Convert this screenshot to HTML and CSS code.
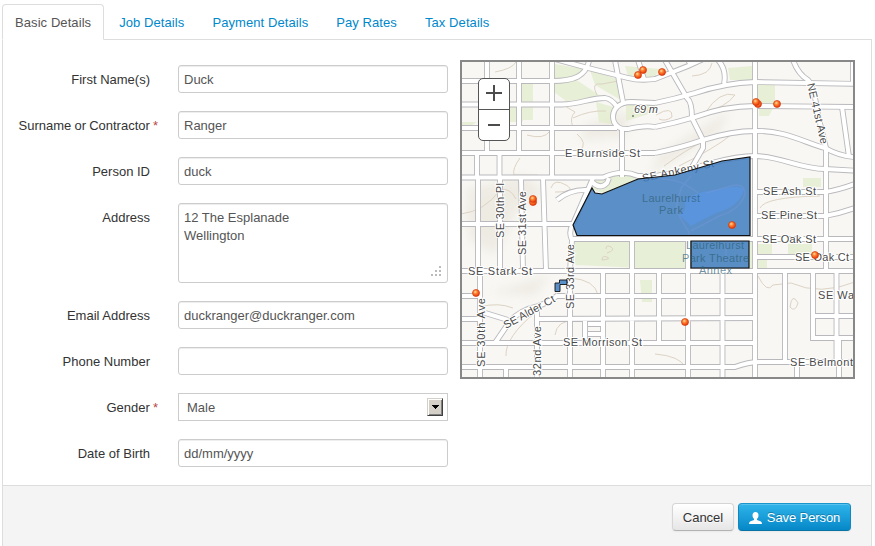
FILE: index.html
```html
<!DOCTYPE html>
<html lang="en">
<head>
<meta charset="utf-8">
<title>Person Details</title>
<link rel="stylesheet" href="styles.css">
</head>
<body>
<nav class="tabs">
  <a class="tab active">Basic Details</a>
  <a class="tab">Job Details</a>
  <a class="tab">Payment Details</a>
  <a class="tab">Pay Rates</a>
  <a class="tab">Tax Details</a>
</nav>
<main class="panel">
  <div class="content">
    <form class="fields">
      <div class="row"><label class="label">First Name(s)</label><input class="control" value="Duck"></div>
      <div class="row"><label class="label required">Surname or Contractor <span class="star">*</span></label><input class="control" value="Ranger"></div>
      <div class="row"><label class="label">Person ID</label><input class="control" value="duck"></div>
      <div class="row"><label class="label">Address</label>
        <div class="control area">12 The Esplanade<br>Wellington
          <svg class="grip" viewBox="0 0 11 11"><path d="M8 0h2v2H8zM4 4h2v2H4zM8 4h2v2H8zM0 8h2v2H0zM4 8h2v2H4zM8 8h2v2H8z"/></svg>
        </div></div>
      <div class="row"><label class="label">Email Address</label><input class="control" value="duckranger@duckranger.com"></div>
      <div class="row"><label class="label">Phone Number</label><input class="control"></div>
      <div class="row"><label class="label required">Gender <span class="star">*</span></label>
        <div class="control select"><span>Male</span><span class="drop"><svg viewBox="0 0 7 4"><path d="M0 0h7v1H6v1H5v1H4v1H3V3H2V2H1V1H0z"/></svg></span></div></div>
      <div class="row"><label class="label">Date of Birth</label><input class="control" value="dd/mm/yyyy"></div>
    </form>
    <div class="map">
      <svg class="canvas" viewBox="462 62 391 315">
        <defs>
          <radialGradient id="pin" cx=".4" cy=".35" r=".65"><stop offset="0" stop-color="#ffe0a0"/><stop offset=".4" stop-color="#ff8230"/><stop offset="1" stop-color="#e83608"/></radialGradient>
          <filter id="soft"><feGaussianBlur stdDeviation="5"/></filter>
          <g id="roads">
            <path d="M487 55V153M519 55V153M552 55V178M477 153V178M499.500 153V178M478 178V271L480 271V385M500 178V271M521 178L523 271M543 178L546 271"/>
            <path d="M455 81H552C572 81 588 78 590 55M455 104.500H562C580 104 590 98 605 98Q612 99 617 107Q611 113 614 122Q618 130 628 129Q645 125 655 127M617 107Q622 102 632 102L655 103M455 128H617M455 153H655M455 177.500H603Q622 169 638 176L655 176"/>
            <path d="M540 55L588 68L628 78Q640 81 655 79L688 66L712 55M614 55L623 102M622 128V177M638 60L644 79M593 178L573 224Q568 232 572 240L570 271V385M557 200Q570 189 588 190M592 182Q600 190 607 183L609 178"/>
            <path d="M655 103Q675 99 695 93Q725 83 755 82L860 84M655 127Q675 123 695 117Q725 106 755 106L860 107M655 153Q680 148 703 140Q732 131 755 131C785 130 805 143 825 148Q843 158 860 157M655 176Q680 172 712 163Q738 156 755 156C780 156 800 169 825 169L860 171"/>
            <path d="M662 55L687 98Q692 102 692 118L703 140V148L692 167M718 60Q727 70 724 84M686 55L691 66M755 55V385M793 60Q798 74 808 80Q814 86 818 115L826 148V271M842 107L849 157M853 55V84M755 192H825Q840 190 860 182M755 216H825Q842 213 860 206M572 239H860M755 257H860"/>
            <path d="M455 224H573M455 271H860M455 296H480M557 296H755M455 319H480M537 319L755 318M455 343H755M455 367H735Q748 362 760 362H860M482 312L508 320M495 343L508 324Q518 310 538 306Q550 302 558 295M537 308V385M603 271V385M632 239V385M659 271V343M688 239V385M722.500 271V385M785 271V362M813 271V338H860M836.500 271V362M813 316H860M797 362V385M839 338V385M506 367V385M585 319V339M588 324H602M588 334H602"/>
          </g>
        </defs>
        <rect x="460" y="60" width="396" height="320" fill="#f8f7f3"/>
        <g fill="#e8e4da" opacity=".6" filter="url(#soft)"><path d="M585 125L630 110L625 137L580 140zM658 155L730 110L720 132L650 175zM465 190L525 175L545 192L480 238zM490 293L550 275L535 295zM465 205L515 218L495 255L470 240z"/></g>
        <path fill="#e1ebcb" opacity=".72" d="M522 81H533V120H522zM462 130L512 104L527 113L522 122H462zM555 64L588 70L575 79L602 97L566 101L554 92zM590 70L620 80L619 99L595 85zM596 102L613 107L612 124L599 122zM625 66L660 69L654 78L628 76zM626 104L658 104L655 112L626 121zM593 179L625 173L638 180L605 194L592 189zM575 242H687V270L575 265zM690 242H753V270H690zM728 68L752 66V80H730zM758 83H775V104H758zM759 108H773L769 116H759zM803 178H821V187H803zM758 244H772V255H758zM788 244H812V255H788zM758 260H767V270H758zM640 280H652V302H642z"/>
        <path class="contour" d="M495 72Q512 69 516 62M597 95Q590 82 602 84L618 81M563 105L575 112Q569 118 573 127Q585 131 597 126M573 118Q590 110 606 111M520 158Q512 169 514 175H538M527 135Q544 140 550 131M461 214Q485 211 500 190Q510 187 516 199M577 134Q588 143 580 151M656 115Q673 105 672 117Q665 122 659 119M705 113Q720 90 735 95Q725 108 704 112M664 166Q710 132 731 135Q715 148 679 166M692 76Q710 75 712 63M760 208Q765 197 820 196M758 276Q767 294 773 285L791 283Q820 296 855 282M790 307Q792 292 798 303Q795 313 790 307M655 354Q680 356 685 367M506 356Q505 337 536 312M480 307Q498 302 513 308M555 335Q557 320 574 321M571 278Q595 280 598 295M606 249Q606 244 611 247T607 253M602 260Q602 255 607 257T602 260M551 188Q554 178 566 185T555 192"/>
        <use href="#roads" class="casing"/><use href="#roads" class="surface"/>
        <circle cx="633" cy="116" r="1" fill="#777"/>
        <g class="maplabel">
          <text x="565" y="157" textLength="75">E Burnside St</text>
          <text x="634" y="113" textLength="24" font-style="italic">69 m</text>
          <text transform="translate(643 182) rotate(-12)" textLength="73">SE Ankeny St</text>
          <text transform="translate(807 84) rotate(77)" textLength="62">NE 41st Ave</text>
          <text x="763" y="195" textLength="53">SE Ash St</text>
          <text x="761" y="219" textLength="56">SE Pine St</text>
          <text x="762" y="243" textLength="54">SE Oak St</text>
          <text x="795" y="261" textLength="54">SE Oak Ct</text>
          <text x="468" y="275" textLength="64">SE Stark St</text>
          <text x="563" y="346" textLength="79">SE Morrison St</text>
          <text x="790" y="366" textLength="63">SE Belmont</text>
          <text x="818" y="299" textLength="36">SE Wa</text>
          <text transform="translate(504 238) rotate(-90)" textLength="55">SE 30th Pl</text>
          <text transform="translate(526 255) rotate(-90)" textLength="64">SE 31st Ave</text>
          <text transform="translate(574 309) rotate(-90)" textLength="65">SE 33rd Ave</text>
          <text transform="translate(485 367) rotate(-90)" textLength="69">SE 30th Ave</text>
          <text transform="translate(541 376) rotate(-90)" textLength="50">32nd Ave</text>
          <text transform="translate(506 329) rotate(-29)" textLength="57">SE Alder Ct</text>
        </g>
        <g class="area-shape"><path d="M592 188L595 193L602 194L638 179L675 175L712 164L722 161L750 157V235.500H577L573 225z"/><path d="M691 241H749V268H691z"/><path class="small" d="M555 283H559.500V280H567V284.500H560V291.500H555z"/></g>
        <path d="M684 200Q700 190 717 190Q740 183 744 190Q739 207 716 213L691 226L679 215Q688 211 684 200z" fill="#5a96e8" opacity=".65"/>
        <path d="M662 179Q678 180 686 185T698 193M691 176L681 188L677 204Q675 212 689 232V235M726 243V262M691 231L719 216Q740 210 745 194Q745 181 727 187L706 193" fill="none" stroke="#7599dc" stroke-width="1.500" opacity=".4"/>
        <g class="parklabel"><text x="642" y="202" textLength="58">Laurelhurst</text><text x="659" y="214" textLength="24">Park</text><text x="686" y="249" textLength="58">Laurelhurst</text><text x="682" y="262" textLength="67">Park Theatre</text><text x="699" y="274" textLength="33">Annex</text></g>
        <g class="pins"><circle cx="638" cy="75" r="3.500"/><circle cx="643" cy="70" r="3.500"/><circle cx="662" cy="72" r="3.500"/><circle cx="758" cy="104" r="3.500"/><circle cx="756" cy="102" r="3.500"/><circle cx="777" cy="104" r="3.500"/><circle cx="533" cy="202" r="3.500"/><circle cx="533" cy="199" r="3.500"/><circle cx="732" cy="225" r="3.500"/><circle cx="815" cy="255" r="3.500"/><circle cx="476" cy="293" r="3.500"/><circle cx="685" cy="322" r="3.500"/></g>
      </svg>
      <div class="zoom"><svg viewBox="0 0 30 30"><path d="M7 14h16M15 6v16"/></svg><svg viewBox="0 0 30 30"><path d="M9 15h12"/></svg></div>
    </div>
  </div>
  <footer class="actions">
    <button class="btn">Cancel</button>
    <button class="btn primary"><svg viewBox="0 0 13 12"><path d="M6.500 0C8.500 0 9.500 1.300 9.500 3.200C9.500 5 8.700 6.200 8 6.800V8L11.500 9.300Q13 10 13 12H0Q0 10 1.500 9.300L5 8V6.800C4.300 6.200 3.500 5 3.500 3.200C3.500 1.300 4.500 0 6.500 0z"/></svg>Save Person</button>
  </footer>
</main>
</body>
</html>
```
FILE: styles.css
```css
* { box-sizing: border-box; }
body {
  margin: 0;
  padding: 4px 3px 0 2px;
  height: 546px;
  overflow: hidden;
  display: flex;
  flex-direction: column;
  background: #fff;
  color: #333;
  font: 13px/18px "Liberation Sans", Arial, sans-serif;
}
.tabs { display: flex; gap: 2px; height: 36px; flex: none; border-bottom: 1px solid #ddd; letter-spacing: .08px; }
.tab { height: 36px; padding: 9px 12px 8px; border: 1px solid transparent; border-radius: 4px 4px 0 0; color: #0088cc; white-space: nowrap; }
.tab.active { color: #555; background: #fff; border-color: #ddd #ddd #fff; }
.panel { flex: 1; display: flex; flex-direction: column; border: solid #ddd; border-width: 0 1px; }
.content { display: flex; gap: 12px; height: 445px; padding-top: 20px; }
.fields { display: flex; flex-direction: column; gap: 18px; width: 445px; padding-top: 5px; }
.row { display: flex; justify-content: space-between; }
.label { width: 147px; padding-top: 6px; text-align: right; white-space: nowrap; }
.label.required { width: 155px; word-spacing: -.5px; }
.star { color: #b94a48; }
.control {
  width: 270px;
  height: 28px;
  margin: 0;
  padding: 4px 5px;
  border: 1px solid #ccc;
  border-radius: 3px;
  background: #fff;
  box-shadow: inset 0 1px 1px rgba(0, 0, 0, .075);
  color: #555;
  font: inherit;
}
.area { position: relative; height: 80px; padding-top: 5px; }
.grip { position: absolute; right: 5px; bottom: 5px; width: 11px; height: 11px; fill: #bbb; }
.select { display: flex; justify-content: space-between; padding: 4px 4px 4px 8px; border-radius: 0; box-shadow: none; }
.select > span:first-child { padding-top: 1px; }
.drop { display: flex; align-items: center; justify-content: center; width: 16px; height: 18px; background: #d4d0c8; border: 1px solid; border-color: #d4d0c8 #404040 #404040 #d4d0c8; box-shadow: inset 1px 1px #fff, inset -1px -1px #808080; }
.drop svg { width: 7px; height: 4px; }
.map { position: relative; width: 395px; height: 319px; border: 2px solid #888; overflow: hidden; }
.canvas { display: block; width: 391px; height: 315px; }
.casing, .surface, .contour { fill: none; }
.casing { stroke: #b9b9bd; stroke-width: 5.8px; }
.surface { stroke: #fff; stroke-width: 4px; }
.contour { stroke: #ddd3c4; stroke-width: 1px; }
.maplabel { fill: #4a4a4a; stroke: #fff; stroke-width: 2px; paint-order: stroke; font-size: 11px; }
.parklabel { fill: #2f5f78; fill-opacity: .7; font-size: 11px; }
.area-shape { fill: #3d7bbf; fill-opacity: .84; stroke: #111; stroke-width: 1.2px; }
.area-shape .small { stroke-width: .9px; }
.pins { fill: url(#pin); stroke: #d03a10; stroke-width: .7px; }
.zoom { position: absolute; left: 16px; top: 16px; width: 32px; height: 63px; background: #fff; border: 1px solid #555; border-radius: 5px; }
.zoom svg { display: block; width: 30px; height: 30px; fill: none; stroke: #4c4c4c; stroke-width: 2px; }
.zoom svg + svg { height: 31px; border-top: 1px solid #555; }
.actions { flex: 1; display: flex; align-items: flex-start; justify-content: flex-end; gap: 4px; padding: 17px 20px 0 0; background: #f4f4f4; border-top: 1px solid #ddd; }
.btn { display: flex; align-items: center; justify-content: center; width: 62px; height: 28px; padding: 1px 0 0; border: 1px solid; border-color: #d5d5d5 #d5d5d5 #b3b3b3; border-radius: 4px; background: linear-gradient(#fff, #e6e6e6); box-shadow: inset 0 1px 0 rgba(255,255,255,.2), 0 1px 2px rgba(0,0,0,.05); color: #333; font: inherit; text-shadow: 0 1px 1px rgba(255,255,255,.75); }
.btn.primary { width: 113px; gap: 5px; letter-spacing: -.1px; color: #fff; background: linear-gradient(#2fb4ea, #0688c8); border-color: #1a95cc #1187bd #0874a6; text-shadow: 0 -1px 0 rgba(0,0,0,.25); }
.btn svg { width: 13px; height: 12px; fill: #fff; }
```
